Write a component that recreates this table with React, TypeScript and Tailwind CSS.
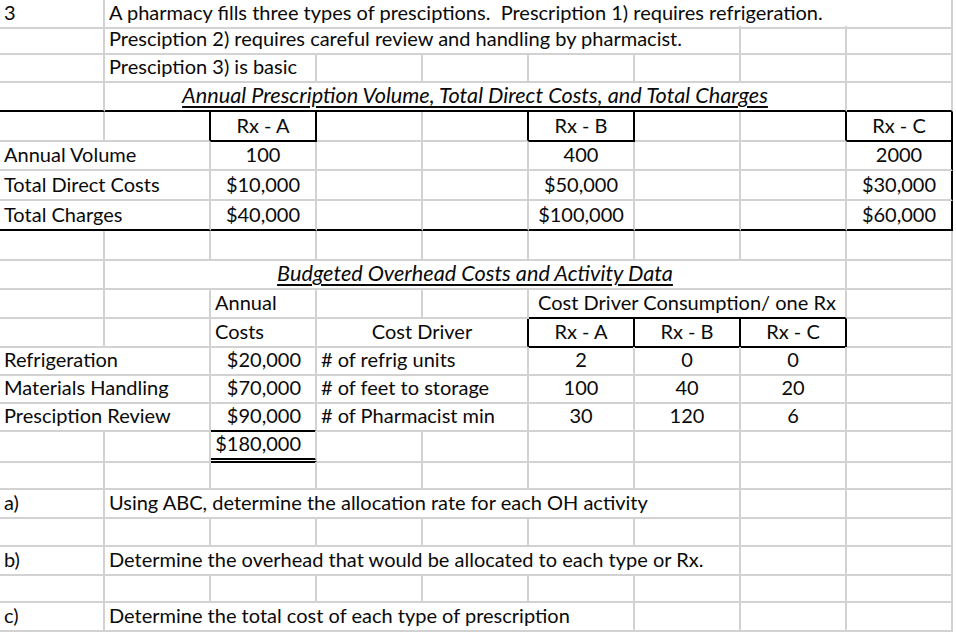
import React from 'react';

type Cell = {
  text?: string;
  span?: number;
  align?: 'left' | 'center' | 'right';
  heading?: boolean;
  cls?: string;
};

type Row = { h: string; cells: Cell[] };

const spanCls: Record<number, string> = {
  1: '',
  2: 'col-span-2',
  3: 'col-span-3',
  5: 'col-span-5',
  6: 'col-span-6',
  7: 'col-span-7',
  8: 'col-span-8',
};

const alignCls = {
  left: 'justify-start pl-[4px]',
  center: 'justify-center',
  right: 'justify-end pr-[14px]',
};

const BB = 'border-b-black';
const BR = 'border-r-black';
const BOX = 'border-r-black border-b-black';

const empty = (n: number, cls = ''): Cell[] => Array.from({ length: n }, () => ({ cls }));

const rows: Row[] = [
  {
    h: 'h-[26px]',
    cells: [
      { text: '3' },
      { text: 'A pharmacy fills three types of presciptions.  Prescription 1) requires refrigeration.', span: 8, cls: 'border-r-0' },
    ],
  },
  {
    h: 'h-[28px]',
    cells: [{}, { text: 'Presciption 2) requires careful review and handling by pharmacist.', span: 6 }, {}, {}],
  },
  {
    h: 'h-[29px]',
    cells: [{}, { text: 'Presciption 3) is basic', span: 2 }, ...empty(6)],
  },
  {
    h: 'h-[29px]',
    cells: [
      { cls: BB },
      { text: 'Annual Prescription Volume, Total Direct Costs, and Total Charges', span: 7, align: 'center', heading: true, cls: BB },
      { cls: BB },
    ],
  },
  {
    h: 'h-[30px]',
    cells: [
      {},
      { cls: BR },
      { text: 'Rx - A', align: 'center', cls: BOX },
      {},
      { cls: BR },
      { text: 'Rx - B', align: 'center', cls: BOX },
      {},
      { cls: BR },
      { text: 'Rx - C', align: 'center', cls: BOX },
    ],
  },
  ...[
    ['Annual Volume', '100', '400', '2000', 'h-[29px]', ''],
    ['Total Direct Costs', '$10,000', '$50,000', '$30,000', 'h-[30px]', ''],
    ['Total Charges', '$40,000', '$100,000', '$60,000', 'h-[30px]', BB],
  ].map(([label, a, b, c, h, bottom]) => ({
    h,
    cells: [
      { text: label, span: 2, cls: bottom },
      { text: a, align: 'center' as const, cls: bottom },
      { cls: bottom },
      { cls: bottom },
      { text: b, align: 'center' as const, cls: bottom },
      { cls: bottom },
      { cls: bottom },
      { text: c, align: 'center' as const, cls: `${BR} ${bottom}` },
    ],
  })),
  { h: 'h-[30px]', cells: empty(9) },
  {
    h: 'h-[29px]',
    cells: [{}, { text: 'Budgeted Overhead Costs and Activity Data', span: 7, align: 'center', heading: true }, {}],
  },
  {
    h: 'h-[29px]',
    cells: [{}, {}, { text: 'Annual' }, {}, {}, { text: 'Cost Driver Consumption/ one Rx', span: 3, align: 'center', cls: BB }, {}],
  },
  {
    h: 'h-[28px]',
    cells: [
      {},
      {},
      { text: 'Costs' },
      { text: 'Cost Driver', span: 2, align: 'center', cls: BR },
      { text: 'Rx - A', align: 'center', cls: BOX },
      { text: 'Rx - B', align: 'center', cls: BOX },
      { text: 'Rx - C', align: 'center', cls: BOX },
      {},
    ],
  },
  ...[
    ['Refrigeration', '$20,000', '# of refrig units', '2', '0', '0', ''],
    ['Materials Handling', '$70,000', '# of feet to storage', '100', '40', '20', ''],
    ['Presciption Review', '$90,000', '# of Pharmacist min', '30', '120', '6', BB],
  ].map(([label, cost, driver, a, b, c, bottom]) => ({
    h: 'h-[28px]',
    cells: [
      { text: label, span: 2 },
      { text: cost, align: 'right' as const, cls: bottom },
      { text: driver, span: 2 },
      { text: a, align: 'center' as const },
      { text: b, align: 'center' as const },
      { text: c, align: 'center' as const },
      {},
    ],
  })),
  {
    h: 'h-[31px]',
    cells: [
      {},
      {},
      { text: '$180,000', align: 'right', cls: 'border-b-[5px] [border-bottom-style:double] border-b-black' },
      ...empty(6),
    ],
  },
  { h: 'h-[28px]', cells: empty(9) },
  {
    h: 'h-[29px]',
    cells: [{ text: 'a)' }, { text: 'Using ABC, determine the allocation rate for each OH activity', span: 6 }, {}, {}],
  },
  { h: 'h-[28px]', cells: empty(9) },
  {
    h: 'h-[28px]',
    cells: [{ text: 'b)' }, { text: 'Determine the overhead that would be allocated to each type or Rx.', span: 6 }, {}, {}],
  },
  { h: 'h-[28px]', cells: empty(9) },
  {
    h: 'h-[29px]',
    cells: [{ text: 'c)' }, { text: 'Determine the total cost of each type of prescription', span: 5 }, {}, {}, {}],
  },
];

const SheetCell: React.FC<{ cell: Cell }> = ({ cell }) => {
  const align = cell.align ?? 'left';
  return (
    <div
      className={`flex items-end pb-[3px] whitespace-pre border-r-2 border-b-2 border-[#d2d2d2] ${spanCls[cell.span ?? 1]} ${alignCls[align]} ${cell.cls ?? ''}`}
    >
      {cell.text && (
        <span
          className={
            cell.heading
              ? 'leading-[24px] text-[21.7px] italic underline underline-offset-[3px] decoration-[1.5px]'
              : 'leading-[24px]'
          }
        >
          {cell.text}
        </span>
      )}
    </div>
  );
};

export default function App() {
  return (
    <div className="w-[956px] h-[632px] overflow-hidden bg-white text-[#0a0a0a] text-[20px] font-['Lato','Open_Sans',sans-serif]">
      {rows.map((row, i) => (
        <div key={i} className={`grid grid-cols-[105px_repeat(8,106px)] ${row.h}`}>
          {row.cells.map((cell, j) => (
            <SheetCell key={j} cell={cell} />
          ))}
        </div>
      ))}
    </div>
  );
}
